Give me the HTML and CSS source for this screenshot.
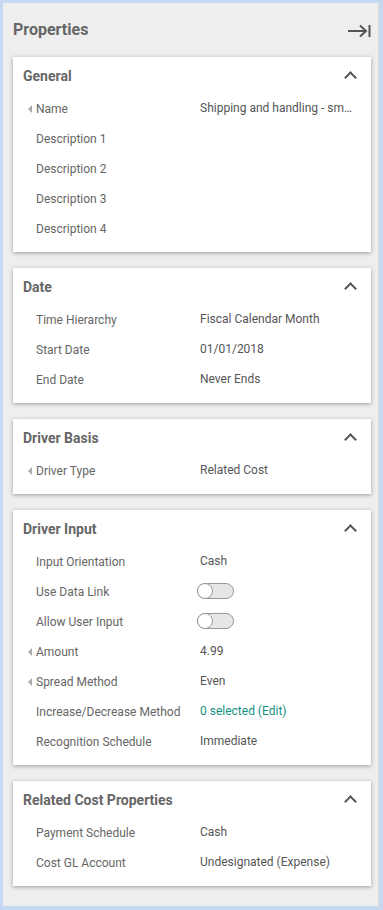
FILE: index.html
```html
<!DOCTYPE html>
<html lang="en">
<head>
    <meta charset="UTF-8">
    <meta name="viewport" content="width=device-width, initial-scale=1.0">
    <title>Properties</title>
    <link rel="stylesheet" href="styles.css">
</head>
<body>
    <div class="panel">
        <div class="panel-header">
            <h1>Properties</h1>
            <svg class="collapse-icon" width="24" height="14" viewBox="0 0 24 14">
                <path d="M1 7 H19 M13 1.5 L19 7 L13 12.5" fill="none" stroke="#555" stroke-width="2"/>
                <path d="M22.5 1 V13" stroke="#555" stroke-width="2"/>
            </svg>
        </div>

        <div class="card">
            <div class="card-header">
                <h2>General</h2>
                <span class="chevron"></span>
            </div>
            <div class="row"><span class="label has-arrow">Name</span><span class="value ellipsis">Shipping and handling - small items</span></div>
            <div class="row"><span class="label">Description 1</span><span class="value"></span></div>
            <div class="row"><span class="label">Description 2</span><span class="value"></span></div>
            <div class="row"><span class="label">Description 3</span><span class="value"></span></div>
            <div class="row"><span class="label">Description 4</span><span class="value"></span></div>
        </div>

        <div class="card">
            <div class="card-header">
                <h2>Date</h2>
                <span class="chevron"></span>
            </div>
            <div class="row"><span class="label">Time Hierarchy</span><span class="value">Fiscal Calendar Month</span></div>
            <div class="row"><span class="label">Start Date</span><span class="value">01/01/2018</span></div>
            <div class="row"><span class="label">End Date</span><span class="value">Never Ends</span></div>
        </div>

        <div class="card">
            <div class="card-header">
                <h2>Driver Basis</h2>
                <span class="chevron"></span>
            </div>
            <div class="row"><span class="label has-arrow">Driver Type</span><span class="value">Related Cost</span></div>
        </div>

        <div class="card">
            <div class="card-header">
                <h2>Driver Input</h2>
                <span class="chevron"></span>
            </div>
            <div class="row"><span class="label">Input Orientation</span><span class="value">Cash</span></div>
            <div class="row"><span class="label">Use Data Link</span><span class="value"><span class="toggle"></span></span></div>
            <div class="row"><span class="label">Allow User Input</span><span class="value"><span class="toggle"></span></span></div>
            <div class="row"><span class="label has-arrow">Amount</span><span class="value">4.99</span></div>
            <div class="row"><span class="label has-arrow">Spread Method</span><span class="value">Even</span></div>
            <div class="row"><span class="label">Increase/Decrease Method</span><span class="value link">0 selected (Edit)</span></div>
            <div class="row"><span class="label">Recognition Schedule</span><span class="value">Immediate</span></div>
        </div>

        <div class="card">
            <div class="card-header">
                <h2>Related Cost Properties</h2>
                <span class="chevron"></span>
            </div>
            <div class="row"><span class="label">Payment Schedule</span><span class="value">Cash</span></div>
            <div class="row"><span class="label">Cost GL Account</span><span class="value">Undesignated (Expense)</span></div>
        </div>
    </div>
</body>
</html>
```

FILE: styles.css
```css
/* page frame */
html, body {
    margin: 0;
    height: 100%;
}

body {
    background-color: #c6d9f1;
    padding: 3px 4px 4px 3px;
    box-sizing: border-box;
    font-family: Roboto, "Liberation Sans", sans-serif;
}

.panel {
    height: 100%;
    background-color: #eeeeee;
    border-right: 1px solid #dcdcdc;
    padding: 0 7px 0 10px;
    box-sizing: border-box;
    overflow: hidden;
}

/* panel title */
.panel-header {
    height: 54px;
    display: flex;
    align-items: center;
    justify-content: space-between;
    padding-bottom: 2px;
    box-sizing: border-box;
}

h1 {
    margin: 0;
    font-size: 16px;
    font-weight: bold;
    color: #666;
}

.collapse-icon {
    margin-top: 4px;
}

/* cards */
.card {
    background-color: #ffffff;
    box-shadow: 0 1px 4px rgba(0, 0, 0, 0.35);
    padding-bottom: 9px;
    margin-bottom: 16px;
}

.card-header {
    height: 36px;
    display: flex;
    align-items: center;
    justify-content: space-between;
    padding: 0 16px 0 10px;
}

h2 {
    margin: 0;
    padding-top: 2px;
    font-size: 14px;
    font-weight: bold;
    color: #666;
}

.chevron {
    width: 7px;
    height: 7px;
    border-left: 2px solid #555;
    border-top: 2px solid #555;
    transform: rotate(45deg);
    margin-top: 4px;
}

/* property rows */
.row {
    height: 30px;
    display: flex;
    align-items: center;
    font-size: 12px;
}

.label {
    width: 164px;
    padding-left: 23px;
    padding-top: 2px;
    color: #666;
    position: relative;
    white-space: nowrap;
}

.has-arrow::before {
    content: "";
    position: absolute;
    left: 15px;
    top: 50%;
    margin-top: -3px;
    border-top: 4px solid transparent;
    border-bottom: 4px solid transparent;
    border-right: 4px solid #aaa;
}

.value {
    flex: 1;
    color: #555;
    padding-right: 17px;
    white-space: nowrap;
    display: flex;
    align-items: center;
}

.ellipsis {
    display: block;
    overflow: hidden;
    text-overflow: ellipsis;
}

.link {
    color: #139182;
}

/* toggle switch (off) */
.toggle {
    width: 37px;
    height: 16px;
    border: 1px solid #999;
    border-radius: 9px;
    background-color: #e6e6e6;
    box-sizing: border-box;
    position: relative;
    margin-left: -3px;
}

.toggle::before {
    content: "";
    position: absolute;
    left: -1px;
    top: -1px;
    width: 16px;
    height: 16px;
    border: 1px solid #999;
    border-radius: 50%;
    background-color: #fff;
    box-sizing: border-box;
}
```
